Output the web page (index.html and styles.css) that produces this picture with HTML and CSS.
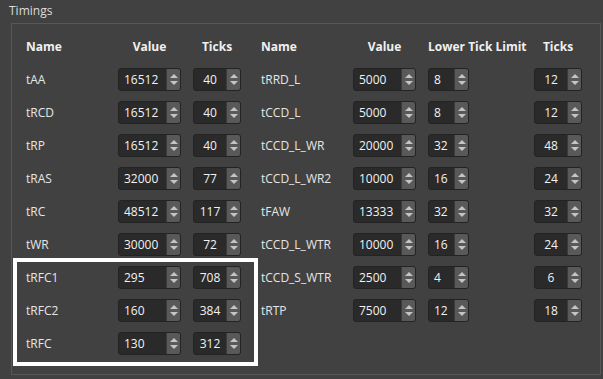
FILE: index.html
```html
<!DOCTYPE html>
<html>
<head>
<meta charset="utf-8">
<link rel="stylesheet" href="styles.css">
</head>
<body>
<div class="title">Timings</div>
<div class="group">
  <div class="grid">
    <div class="h">Name</div><div class="h hc w63">Value</div><div class="h hc w48">Ticks</div>
    <div class="h">Name</div><div class="h hc w63">Value</div><div class="h nw">Lower Tick Limit</div><div class="h hc w48">Ticks</div>

    <div class="lbl">tAA</div>
    <div class="spin w63"><span class="val">16512</span><span class="btn"></span></div>
    <div class="spin w48"><span class="val c">40</span><span class="btn"></span></div>
    <div class="lbl">tRRD_L</div>
    <div class="spin w63"><span class="val">5000</span><span class="btn"></span></div>
    <div class="spin w41"><span class="val">8</span><span class="btn"></span></div>
    <div class="spin w48"><span class="val c">12</span><span class="btn"></span></div>

    <div class="lbl">tRCD</div>
    <div class="spin w63"><span class="val">16512</span><span class="btn"></span></div>
    <div class="spin w48"><span class="val c">40</span><span class="btn"></span></div>
    <div class="lbl">tCCD_L</div>
    <div class="spin w63"><span class="val">5000</span><span class="btn"></span></div>
    <div class="spin w41"><span class="val">8</span><span class="btn"></span></div>
    <div class="spin w48"><span class="val c">12</span><span class="btn"></span></div>

    <div class="lbl">tRP</div>
    <div class="spin w63"><span class="val">16512</span><span class="btn"></span></div>
    <div class="spin w48"><span class="val c">40</span><span class="btn"></span></div>
    <div class="lbl">tCCD_L_WR</div>
    <div class="spin w63"><span class="val">20000</span><span class="btn"></span></div>
    <div class="spin w41"><span class="val">32</span><span class="btn"></span></div>
    <div class="spin w48"><span class="val c">48</span><span class="btn"></span></div>

    <div class="lbl">tRAS</div>
    <div class="spin w63"><span class="val">32000</span><span class="btn"></span></div>
    <div class="spin w48"><span class="val c">77</span><span class="btn"></span></div>
    <div class="lbl">tCCD_L_WR2</div>
    <div class="spin w63"><span class="val">10000</span><span class="btn"></span></div>
    <div class="spin w41"><span class="val">16</span><span class="btn"></span></div>
    <div class="spin w48"><span class="val c">24</span><span class="btn"></span></div>

    <div class="lbl">tRC</div>
    <div class="spin w63"><span class="val">48512</span><span class="btn"></span></div>
    <div class="spin w48"><span class="val c">117</span><span class="btn"></span></div>
    <div class="lbl">tFAW</div>
    <div class="spin w63"><span class="val">13333</span><span class="btn"></span></div>
    <div class="spin w41"><span class="val">32</span><span class="btn"></span></div>
    <div class="spin w48"><span class="val c">32</span><span class="btn"></span></div>

    <div class="lbl">tWR</div>
    <div class="spin w63"><span class="val">30000</span><span class="btn"></span></div>
    <div class="spin w48"><span class="val c">72</span><span class="btn"></span></div>
    <div class="lbl">tCCD_L_WTR</div>
    <div class="spin w63"><span class="val">10000</span><span class="btn"></span></div>
    <div class="spin w41"><span class="val">16</span><span class="btn"></span></div>
    <div class="spin w48"><span class="val c">24</span><span class="btn"></span></div>

    <div class="lbl">tRFC1</div>
    <div class="spin w63"><span class="val">295</span><span class="btn"></span></div>
    <div class="spin w48"><span class="val c">708</span><span class="btn"></span></div>
    <div class="lbl">tCCD_S_WTR</div>
    <div class="spin w63"><span class="val">2500</span><span class="btn"></span></div>
    <div class="spin w41"><span class="val">4</span><span class="btn"></span></div>
    <div class="spin w48"><span class="val c">6</span><span class="btn"></span></div>

    <div class="lbl">tRFC2</div>
    <div class="spin w63"><span class="val">160</span><span class="btn"></span></div>
    <div class="spin w48"><span class="val c">384</span><span class="btn"></span></div>
    <div class="lbl">tRTP</div>
    <div class="spin w63"><span class="val">7500</span><span class="btn"></span></div>
    <div class="spin w41"><span class="val">12</span><span class="btn"></span></div>
    <div class="spin w48"><span class="val c">18</span><span class="btn"></span></div>

    <div class="lbl">tRFC</div>
    <div class="spin w63"><span class="val">130</span><span class="btn"></span></div>
    <div class="spin w48"><span class="val c">312</span><span class="btn"></span></div>
  </div>
  <div class="highlight"></div>
</div>
</body>
</html>
```
FILE: styles.css
```css
html, body {
  margin: 0;
  padding: 0;
  background: #414141;
  width: 603px;
  height: 379px;
  overflow: hidden;
  font-family: "Open Sans", "Noto Sans", sans-serif;
  font-size: 12px;
  color: #e6e6e6;
}
.title {
  height: 23px;
  padding-left: 9px;
  line-height: 23px;
  box-sizing: border-box;
  padding-top: 0;
  color: #dcdcdc;
  position: relative;
  top: -1px;
}
.group {
  position: relative;
  margin-left: 11px;
  width: 590px;
  height: 352px;
  box-sizing: border-box;
  border: 1px solid #575757;
  padding: 11px 0 0 14px;
}
.grid {
  display: grid;
  grid-template-columns: 92px 75px 68px 92px 75px 106px 48px;
  grid-auto-rows: 23px;
  row-gap: 10px;
  align-items: center;
}
.h {
  font-weight: bold;
  color: #f0f0f0;
}
.hc { text-align: center; }
.nw { white-space: nowrap; }
.w63 { width: 63px; }
.w48 { width: 48px; }
.w41 { width: 41px; }
.lbl { color: #e6e6e6; }
.spin {
  display: flex;
  height: 23px;
  box-sizing: border-box;
  background: #2a2a2a;
  border: 1px solid #232323;
  border-radius: 3px;
  overflow: hidden;
}
.val {
  flex: 1;
  padding-left: 5px;
  line-height: 21px;
  color: #f2f2f2;
}
.val.c {
  padding-left: 0;
  text-align: center;
}
.btn {
  width: 13px;
  background: #595959;
  border-left: 1px solid #3a3a3a;
  display: flex;
  flex-direction: column;
  align-items: center;
  justify-content: center;
  gap: 3px;
}
.btn::before {
  content: "";
  border-left: 4px solid transparent;
  border-right: 4px solid transparent;
  border-bottom: 4px solid #c4c4c4;
}
.btn::after {
  content: "";
  border-left: 4px solid transparent;
  border-right: 4px solid transparent;
  border-top: 4px solid #c4c4c4;
}
.highlight {
  position: absolute;
  left: 1px;
  top: 234px;
  width: 245px;
  height: 108px;
  box-sizing: border-box;
  border: 4px solid #ffffff;
}
```
